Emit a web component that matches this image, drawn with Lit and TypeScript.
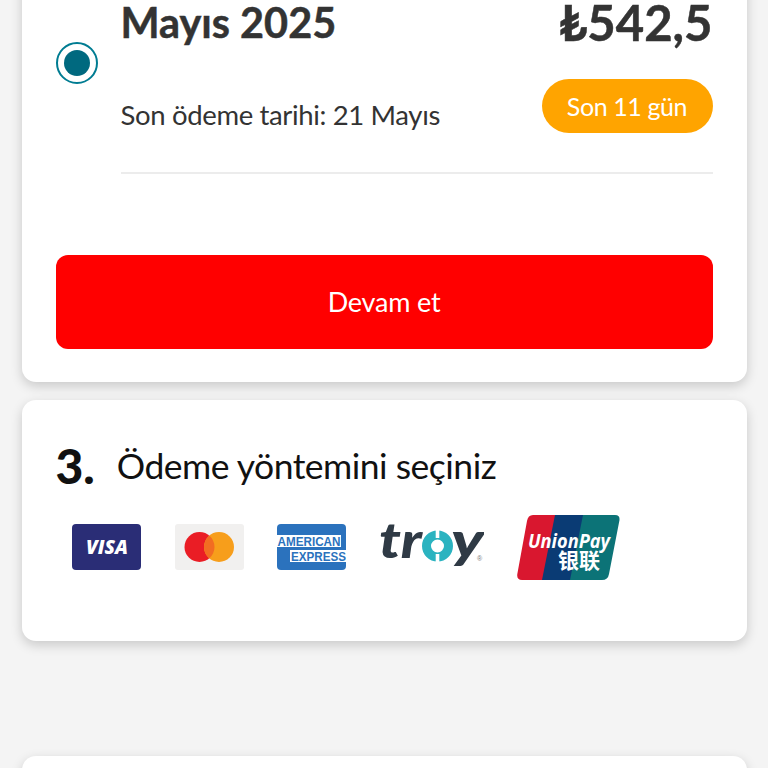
import { html, css, LitElement, TemplateResult, CSSResult } from 'lit';
import { customElement } from 'lit/decorators.js';

@customElement('app-root')
export class AppRoot extends LitElement {
  render(): TemplateResult {
    return html`
      <div class="page">
        <section class="card bill-card">
          <div class="bill">
            <div class="radio"><span class="dot"></span></div>
            <div class="bill-body">
              <div class="row top">
                <span class="month">Mayıs 2025</span>
                <span class="amount">₺542,5</span>
              </div>
              <div class="row bottom">
                <span class="due">Son ödeme tarihi: 21 Mayıs</span>
                <span class="pill">Son 11 gün</span>
              </div>
              <div class="divider"></div>
            </div>
          </div>
          <button class="cta">Devam et</button>
        </section>

        <section class="card method-card">
          <div class="heading">
            <span class="step">3.</span>
            <span class="heading-text">Ödeme yöntemini seçiniz</span>
          </div>
          <div class="logos">
            ${this.visa} ${this.mastercard} ${this.amex} ${this.troy} ${this.unionPay}
          </div>
        </section>

        <section class="card next-card"></section>
      </div>
    `;
  }

  private get visa(): TemplateResult {
    return html`<svg class="logo visa" width="69" height="46" viewBox="0 0 69 46">
      <rect width="69" height="46" rx="4" fill="#2a2d76" />
      <text x="14" y="30" textLength="42" lengthAdjust="spacingAndGlyphs" class="visa-text">VISA</text>
    </svg>`;
  }

  private get mastercard(): TemplateResult {
    return html`<svg class="logo mc" width="69" height="46" viewBox="0 0 69 46">
      <rect width="69" height="46" rx="3" fill="#f1f0ef" />
      <circle cx="24.5" cy="23" r="15" fill="#ea1d25" />
      <circle cx="44" cy="23" r="15" fill="#f79e1b" />
      <path d="M34.25 11.6a15 15 0 0 1 0 22.8a15 15 0 0 1 0-22.8z" fill="#f26d22" />
    </svg>`;
  }

  private get amex(): TemplateResult {
    return html`<svg class="logo amex" width="69" height="46" viewBox="0 0 69 46">
      <rect width="69" height="46" rx="4" fill="#2b72bd" />
      <rect x="0" y="11" width="64" height="12" fill="#fff" />
      <rect x="13" y="26" width="56" height="12" fill="#fff" />
      <text x="0.5" y="21.8" textLength="63" lengthAdjust="spacingAndGlyphs" class="amex-text">AMERICAN</text>
      <text x="14" y="36.8" textLength="55" lengthAdjust="spacingAndGlyphs" class="amex-text">EXPRESS</text>
    </svg>`;
  }

  private get troy(): TemplateResult {
    return html`<svg class="logo troy" width="104" height="50" viewBox="0 0 104 50">
      <text x="-1" y="36" textLength="43" lengthAdjust="spacingAndGlyphs" class="troy-text">tr</text>
      <circle cx="57.5" cy="24" r="11" fill="none" stroke="#2bb3c0" stroke-width="9" />
      <rect x="55.7" y="7" width="3.6" height="9" fill="#fff" />
      <rect x="55.7" y="32" width="3.6" height="9" fill="#fff" />
      <text x="71" y="36" textLength="33" lengthAdjust="spacingAndGlyphs" class="troy-text">y</text>
      <text x="97" y="39" class="troy-reg">®</text>
    </svg>`;
  }

  private get unionPay(): TemplateResult {
    return html`<svg class="logo up" width="103" height="65" viewBox="0 0 103 65">
      <path d="M16 0H40L29 65H5Q-1 65 0.5 58L10 6Q11 0 16 0z" fill="#d9172f" />
      <path d="M38 0H68L55 65H25z" fill="#0a3b74" />
      <path d="M66 0H98Q103 0 102.5 5L92 59Q91 65 85 65H53z" fill="#0c7377" />
      <text x="11" y="33" textLength="82" lengthAdjust="spacingAndGlyphs" class="up-text">UnionPay</text>
      <text x="41" y="53" class="up-cjk">银联</text>
    </svg>`;
  }

  static get styles(): CSSResult {
    return css`
      :host {
        display: block;
        height: 768px;
        overflow: hidden;
        background: #f4f4f4;
        font-family: Lato, 'Open Sans', sans-serif;
      }

      .page {
        display: flex;
        flex-direction: column;
        padding: 0 21.5px;
        margin-top: -20px;
      }

      .card {
        background: #fff;
        border-radius: 14px;
        box-shadow: 0 4px 12px rgba(0, 0, 0, 0.18);
        box-sizing: border-box;
      }

      .bill-card {
        height: 402px;
        padding: 0 34px;
        border-radius: 0 0 14px 14px;
      }

      .bill {
        display: flex;
        align-items: flex-start;
      }

      .radio {
        width: 38px;
        height: 38px;
        margin-top: 62px;
        margin-right: 23px;
        flex: none;
        border: 2.5px solid #007c92;
        border-radius: 50%;
        display: flex;
        align-items: center;
        justify-content: center;
      }

      .dot {
        width: 26px;
        height: 26px;
        border-radius: 50%;
        background: #00697f;
      }

      .bill-body {
        flex: 1;
        padding-top: 16px;
      }

      .row {
        display: flex;
        justify-content: space-between;
      }

      .row.top {
        align-items: center;
        height: 52px;
      }

      .row.bottom {
        align-items: flex-start;
        height: 54px;
        margin-top: 31px;
      }

      .month {
        margin-top: 2px;
        font-size: 41.4px;
        line-height: 1;
        font-weight: 700;
        color: #333;
        -webkit-text-stroke: 0.5px #333;
      }

      .amount {
        font-size: 49px;
        line-height: 1;
        font-weight: 700;
        color: #333;
        -webkit-text-stroke: 0.5px #333;
      }

      .due {
        margin-top: 19px;
        font-size: 27.5px;
        letter-spacing: -0.35px;
        line-height: 34px;
        color: #333;
      }

      .pill {
        width: 171px;
        height: 54px;
        border-radius: 27px;
        background: #ffa400;
        color: #fff;
        font-size: 25px;
        letter-spacing: -0.4px;
        display: flex;
        align-items: center;
        justify-content: center;
      }

      .divider {
        height: 2px;
        margin-top: 39px;
        background: #ececec;
      }

      .cta {
        display: block;
        width: 100%;
        height: 94px;
        margin-top: 81px;
        padding: 0 0 2px;
        border: 0;
        border-radius: 12px;
        background: #f00;
        color: #fff;
        font: inherit;
        font-size: 27px;
        letter-spacing: -0.2px;
      }

      .method-card {
        height: 241px;
        margin-top: 18px;
        padding: 38px 34px 0;
      }

      .heading {
        display: flex;
        align-items: center;
        gap: 22px;
        height: 56px;
        color: #111;
      }

      .step {
        font-size: 48px;
        line-height: 1;
        font-weight: 900;
      }

      .heading-text {
        font-size: 35.5px;
        letter-spacing: -0.5px;
        line-height: 1.2;
      }

      .logos {
        display: flex;
        align-items: center;
        gap: 34px;
        height: 66px;
        margin-top: 20px;
        padding-left: 16px;
      }

      .logo {
        flex: none;
        display: block;
      }

      .logo.amex {
        margin-left: -1px;
      }

      .logo.up {
        margin-left: -1px;
      }

      .visa-text {
        font: italic 800 20px 'Open Sans', sans-serif;
        fill: #fff;
      }

      .amex-text {
        font: 700 13.5px 'Liberation Sans', sans-serif;
        fill: #2b72bd;
      }

      .troy-text {
        font: italic 900 50px Lato, sans-serif;
        fill: #2f3a45;
      }

      .troy-reg {
        font: 7px 'Liberation Sans', sans-serif;
        fill: #777;
      }

      .up-text {
        font: italic 700 20px 'Open Sans', sans-serif;
        fill: #fff;
      }

      .up-cjk {
        font: 700 21px 'Noto Sans CJK SC', sans-serif;
        fill: #fff;
      }

      .next-card {
        height: 60px;
        margin-top: 115px;
        border-radius: 14px 14px 0 0;
      }
    `;
  }
}
